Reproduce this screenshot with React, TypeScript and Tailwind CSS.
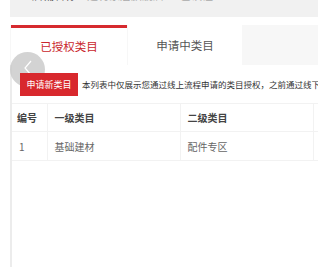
const rows = [{ no: "1", first: "基础建材", second: "配件专区" }];

export default function App() {
    return (
        <div
            className="relative h-[267px] w-[318px] overflow-hidden bg-white pl-[10px]"
            style={{ fontFamily: '"Noto Sans CJK SC", "Noto Sans", sans-serif' }}
        >
            <div className="h-[17px] overflow-hidden bg-[#f1f1f1] pl-[22px]">
                <div className="-mt-[11px] text-[11px] leading-[13px] text-[#555]">
                    店铺名称：<span className="text-[#aaa]">建材家居旗舰店 · 已认证</span>
                </div>
            </div>

            <div className="mt-[8px] flex h-[40px] bg-[#f7f7f7] pl-px">
                <div className="flex w-[116px] items-center justify-center border-t-[3px] border-[#d62a2f] bg-white text-[11.5px] text-[#c9262c]">
                    已授权类目
                </div>
                <div className="ml-px flex w-[114px] items-center justify-center bg-white pt-[2px] text-[11.5px] text-[#555]">
                    申请中类目
                </div>
            </div>

            <div className="h-[202px] border-l-2 border-[#ececec] bg-white">
                <div className="flex items-center gap-[4px] whitespace-nowrap pt-[8px] pl-[8px]">
                    <button className="relative z-10 h-[23px] w-[58px] shrink-0 bg-[#d8282d] text-[9px] text-white">
                        申请新类目
                    </button>
                    <span className="text-[8.5px] text-[#333]">
                        本列表中仅展示您通过线上流程申请的类目授权，之前通过线下申请的类目请联系客服
                    </span>
                </div>

                <table className="mt-[7px] w-[420px] table-fixed border-collapse">
                    <thead>
                        <tr className="h-[28px] border-y border-[#f2f2f2]">
                            <th className="w-[35px] border-r border-[#f2f2f2] pl-[5px] text-left text-[10px] font-bold text-[#444]">
                                编号
                            </th>
                            <th className="w-[133px] border-r border-[#f2f2f2] pl-[7px] text-left text-[10px] font-bold text-[#444]">
                                一级类目
                            </th>
                            <th className="w-[133px] border-r border-[#f2f2f2] pl-[7px] text-left text-[10px] font-bold text-[#444]">
                                二级类目
                            </th>
                            <th className="pl-[7px] text-left text-[10px] font-bold text-[#444]">操作</th>
                        </tr>
                    </thead>
                    <tbody>
                        {rows.map((r) => (
                            <tr key={r.no} className="h-[29px] border-b border-[#f2f2f2]">
                                <td className="border-r border-[#f2f2f2] pl-[7px] text-[10px] text-[#666]">{r.no}</td>
                                <td className="border-r border-[#f2f2f2] pl-[7px] text-[10px] text-[#666]">{r.first}</td>
                                <td className="border-r border-[#f2f2f2] pl-[7px] text-[10px] text-[#666]">{r.second}</td>
                                <td className="pl-[7px] text-[10px] text-[#666]">已授权</td>
                            </tr>
                        ))}
                    </tbody>
                </table>
            </div>

            {/* floating back button */}
            <div className="absolute left-[10px] top-[52px] flex h-[35px] w-[35px] items-center justify-center rounded-full bg-[#c8c8c8]/80">
                <svg width="10" height="16" viewBox="0 0 10 16" className="-mt-[3px]">
                    <path d="M8 1 L2 8 L8 15" fill="none" stroke="#fff" strokeWidth="1.2" />
                </svg>
            </div>
        </div>
    );
}
